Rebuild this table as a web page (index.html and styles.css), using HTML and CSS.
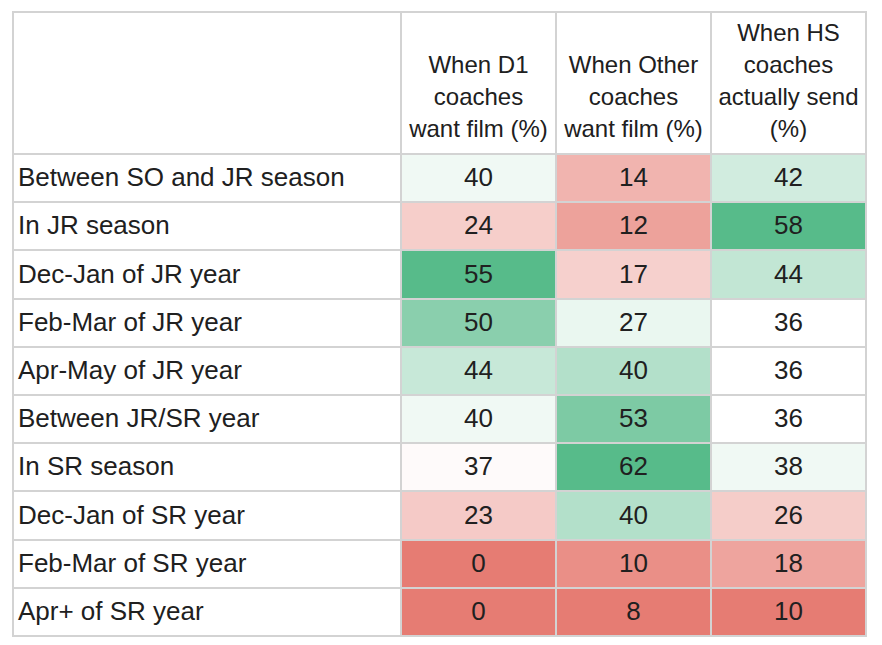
FILE: index.html
```html
<!DOCTYPE html>
<html lang="en">
<head>
<meta charset="utf-8">
<title>Film timing</title>
<link rel="stylesheet" href="styles.css">
</head>
<body>
<table class="sheet">
  <colgroup>
    <col class="col-label">
    <col class="col-num">
    <col class="col-num">
    <col class="col-num">
  </colgroup>
  <thead>
    <tr>
      <th class="corner"></th>
      <th>When D1 coaches want film (%)</th>
      <th>When Other coaches want film (%)</th>
      <th>When HS coaches actually send (%)</th>
    </tr>
  </thead>
  <tbody>
    <tr><td class="label">Between SO and JR season</td><td class="num" style="background:#f0f9f4">40</td><td class="num" style="background:#f1b4af">14</td><td class="num" style="background:#d1ecdf">42</td></tr>
    <tr><td class="label">In JR season</td><td class="num" style="background:#f6ceca">24</td><td class="num" style="background:#eda29b">12</td><td class="num" style="background:#57bb8a">58</td></tr>
    <tr><td class="label">Dec-Jan of JR year</td><td class="num" style="background:#57bb8a">55</td><td class="num" style="background:#f6d0cd">17</td><td class="num" style="background:#c2e6d4">44</td></tr>
    <tr><td class="label">Feb-Mar of JR year</td><td class="num" style="background:#8acfad">50</td><td class="num" style="background:#eaf7f0">27</td><td class="num" style="background:#ffffff">36</td></tr>
    <tr><td class="label">Apr-May of JR year</td><td class="num" style="background:#c7e8d8">44</td><td class="num" style="background:#b3e0ca">40</td><td class="num" style="background:#ffffff">36</td></tr>
    <tr><td class="label">Between JR/SR year</td><td class="num" style="background:#f0f9f4">40</td><td class="num" style="background:#7dcaa4">53</td><td class="num" style="background:#ffffff">36</td></tr>
    <tr><td class="label">In SR season</td><td class="num" style="background:#fefafa">37</td><td class="num" style="background:#57bb8a">62</td><td class="num" style="background:#f0f9f4">38</td></tr>
    <tr><td class="label">Dec-Jan of SR year</td><td class="num" style="background:#f5cac7">23</td><td class="num" style="background:#b3e0ca">40</td><td class="num" style="background:#f5cdc9">26</td></tr>
    <tr><td class="label">Feb-Mar of SR year</td><td class="num" style="background:#e67c73">0</td><td class="num" style="background:#ea8f87">10</td><td class="num" style="background:#eea49e">18</td></tr>
    <tr><td class="label">Apr+ of SR year</td><td class="num" style="background:#e67c73">0</td><td class="num" style="background:#e67c73">8</td><td class="num" style="background:#e67c73">10</td></tr>
  </tbody>
</table>
</body>
</html>
```
FILE: styles.css
```css
html, body {
  margin: 0;
  background: #ffffff;
}

body {
  padding: 11px 12px;
  font-family: "Liberation Sans", Arial, sans-serif;
  color: #202020;
}

.sheet {
  border-collapse: collapse;
  table-layout: fixed;
  width: 855px;
}

.col-label {
  width: 388px;
}

.col-num {
  width: 155px;
}

.sheet th,
.sheet td {
  border: 2px solid #d3d3d3;
  vertical-align: bottom;
  line-height: 32px;
}

.sheet th {
  height: 132px;
  padding: 0 5px 8px;
  font-size: 24px;
  font-weight: normal;
  text-align: center;
  background: #ffffff;
}

.sheet td {
  height: 38.2px;
  padding: 0 3px 8px;
  font-size: 26px;
}

.sheet td.label {
  text-align: left;
  padding-left: 4px;
  background: #ffffff;
}

.sheet td.num {
  text-align: center;
}
```
